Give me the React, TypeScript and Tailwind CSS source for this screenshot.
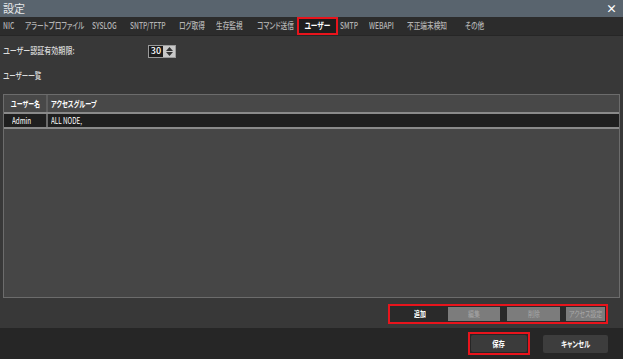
import React from "react";

interface Tab {
  label: string;
  width: number;
  active?: boolean;
}

const tabs: Tab[] = [
  { label: "NIC", width: 22 },
  { label: "アラートプロファイル", width: 67 },
  { label: "SYSLOG", width: 38 },
  { label: "SNTP/TFTP", width: 49 },
  { label: "ログ取得", width: 37 },
  { label: "生存監視", width: 41 },
  { label: "コマンド送信", width: 40 },
  { label: "ユーザー", width: 41, active: true },
  { label: "SMTP", width: 29 },
  { label: "WEBAPI", width: 38 },
  { label: "不正端末検知", width: 58 },
  { label: "その他", width: 40 },
];

const font = "font-['Noto_Sans_CJK_JP','Noto_Sans',sans-serif] [font-feature-settings:'palt']";

// Narrow text, the original UI font is condensed
const Narrow = ({
  children,
  center,
  scale = "scale-x-[0.74]",
}: {
  children: React.ReactNode;
  center?: boolean;
  scale?: string;
}) => (
  <span className={`inline-block whitespace-nowrap ${scale} ${center ? "origin-center" : "origin-left"}`}>
    {children}
  </span>
);

export default function App() {
  return (
    <div className={`w-[623px] h-[359px] flex flex-col bg-[#383838] overflow-hidden ${font}`}>
      {/* Title bar */}
      <div className="h-[17px] flex items-center justify-between bg-[#59646e] pl-[3px] pr-[6px]">
        <span className="text-[11px] leading-none text-[#e6e8ea]">設定</span>
        <span className="text-[11px] leading-none font-bold text-white">×</span>
      </div>

      {/* Tabs */}
      <div className="h-[19px] flex items-stretch bg-[#2c2c2c] pl-[3px] border-b border-[#262626]">
        {tabs.map((tab) =>
          tab.active ? (
            <div
              key={tab.label}
              style={{ width: tab.width }}
              className="mr-[2px] flex items-center justify-center border-2 border-[#e8141c] bg-[#1e1e1e] text-[9px] font-bold text-white"
            >
              <Narrow center>{tab.label}</Narrow>
            </div>
          ) : (
            <div
              key={tab.label}
              style={{ width: tab.width }}
              className="flex items-center text-[9px] font-medium text-[#b4b4b4]"
            >
              <Narrow>{tab.label}</Narrow>
            </div>
          )
        )}
      </div>

      {/* Content */}
      <div className="flex-1 flex flex-col px-[3px]">
        <div className="mt-[8px] h-[14px] flex items-center">
          <span className="w-[145px] text-[9px] font-medium text-[#dcdcdc]">
            <Narrow scale="scale-x-[0.78]">ユーザー認証有効期限:</Narrow>
          </span>
          <div className="flex h-[13px] border border-[#9a9a9a]">
            <div className="w-[14px] bg-[#1c1c1c] flex items-center justify-center text-[9px] font-medium text-white">30</div>
            <div className="w-[12px] bg-[#c8c8c8] flex flex-col items-center justify-center gap-[1px]">
              <svg width="7" height="4" viewBox="0 0 7 4"><path d="M3.5 0 L7 4 L0 4 Z" fill="#333" /></svg>
              <svg width="7" height="4" viewBox="0 0 7 4"><path d="M0 0 L7 0 L3.5 4 Z" fill="#333" /></svg>
            </div>
          </div>
        </div>

        <div className="mt-[12px] h-[12px] flex items-center text-[9px] font-medium text-[#dcdcdc]">
          <Narrow scale="scale-x-[0.72]">ユーザー一覧</Narrow>
        </div>

        {/* Table */}
        <div className="mt-[12px] h-[204px] w-[617px] flex flex-col border border-[#6c6c6c] bg-[#464646]">
          <div className="h-[17px] flex bg-[#484848] text-[8.5px] font-bold text-white">
            <div className="w-[44px] flex items-center pl-[7px] border-r-2 border-[#5e5e5e]">
              <Narrow scale="scale-x-[0.7]">ユーザー名</Narrow>
            </div>
            <div className="flex items-center pl-[3px]">
              <Narrow scale="scale-x-[0.72]">アクセスグループ</Narrow>
            </div>
          </div>
          <div className="h-[17px] flex bg-[#1f1f1f] border-y-2 border-[#8a8a8a] text-[8.5px] text-white">
            <div className="w-[44px] flex items-center pl-[8px] border-r-2 border-[#6a6a6a]">
              <Narrow>Admin</Narrow>
            </div>
            <div className="flex items-center pl-[3px]">
              <Narrow>ALL NODE,</Narrow>
            </div>
          </div>
          <div className="flex-1" />
        </div>

        {/* Action buttons */}
        <div className="mt-[6px] flex justify-end pr-[12px]">
          <div className="h-[20px] flex items-stretch border-2 border-[#e8141c] bg-[#2a2a2a] p-[1px]">
            <div className="w-[57px] flex items-center justify-center bg-[#2a2a2a] text-[8px] font-bold text-white">
              <Narrow center>追加</Narrow>
            </div>
            <div className="w-[52px] flex items-center justify-center bg-[#7c7c7c] text-[8px] text-[#a8a8a8]">
              <Narrow center>編集</Narrow>
            </div>
            <div className="w-[7px]" />
            <div className="w-[53px] flex items-center justify-center bg-[#7c7c7c] text-[8px] text-[#a8a8a8]">
              <Narrow center>削除</Narrow>
            </div>
            <div className="w-[6px]" />
            <div className="w-[39px] flex items-center justify-center bg-[#7c7c7c] text-[8px] text-[#a8a8a8]">
              <Narrow center>アクセス設定</Narrow>
            </div>
          </div>
        </div>
      </div>

      {/* Footer */}
      <div className="h-[31px] flex items-center justify-end gap-[13px] bg-[#262626] pr-[15px]">
        <div className="h-[23px] w-[62px] border-2 border-[#e8141c] p-[1px]">
          <div className="h-full flex items-center justify-center rounded-[2px] bg-[#3b3b3b] text-[8.5px] font-bold text-white">
            <Narrow center>保存</Narrow>
          </div>
        </div>
        <div className="h-[18px] w-[65px] flex items-center justify-center rounded-[2px] bg-[#3d3d3d] text-[8.5px] font-bold text-white">
          <Narrow center>キャンセル</Narrow>
        </div>
      </div>
    </div>
  );
}
